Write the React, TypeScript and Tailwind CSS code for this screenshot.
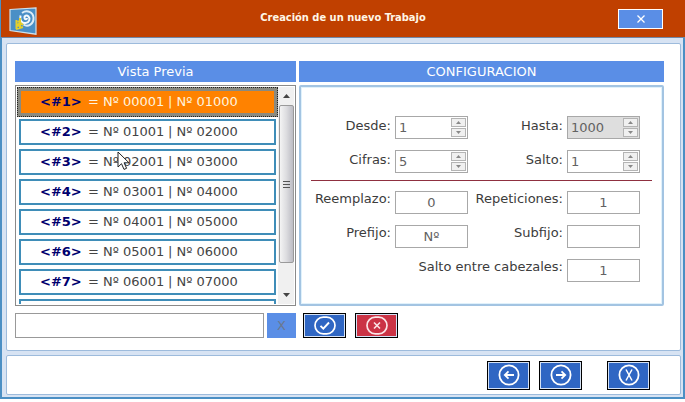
import { useState } from "react";
import type { ReactNode } from "react";
import clsx from "clsx";

interface Job {
  id: number;
  from: string;
  to: string;
}

const jobs: Job[] = [
  { id: 1, from: "00001", to: "01000" },
  { id: 2, from: "01001", to: "02000" },
  { id: 3, from: "02001", to: "03000" },
  { id: 4, from: "03001", to: "04000" },
  { id: 5, from: "04001", to: "05000" },
  { id: 6, from: "05001", to: "06000" },
  { id: 7, from: "06001", to: "07000" },
];

const Logo = () => (
  <svg width="28" height="28" viewBox="0 0 28 28" aria-hidden="true">
    <path d="M1 2.5 27 .8v26.4L1 23.5Z" fill="#4a8fc6" stroke="#cfe0ea" strokeWidth="1.2" />
    <path
      d="M13 6c5-3.500 11-1 11.500 4.500C25 17 19 20.500 14.500 17.500"
      fill="none"
      stroke="#dcecf7"
      strokeWidth="2"
    />
    <path
      d="M11.500 8.500c-1 5 1.500 8 5 7.500 4-.5 5-4.500 3-6.500s-4.500-.5-4 1.500 2.500 1.500 2.500 0"
      fill="none"
      stroke="#f4fafe"
      strokeWidth="2"
    />
    <path d="M7.500 13v9M11 11v5l-4 3 4-1v4M7 22l7-2M9 14l5 4" fill="none" stroke="#e3cf2c" strokeWidth="2" />
  </svg>
);

const Pointer = () => (
  <svg width="13" height="20" viewBox="0 0 13 20" aria-hidden="true">
    <path d="M1 1v15l3.5-3.3L7 18.4l2.6-1.1-2.5-5.5H12Z" fill="#fff" stroke="#222" />
  </svg>
);

const CheckIcon = () => (
  <svg width="22" height="19" viewBox="0 0 22 19" fill="none" stroke="#fff" strokeWidth="1.7" aria-hidden="true">
    <rect x="1" y="1.2" width="20" height="16.6" rx="8.3" />
    <path d="m6.500 9.800 2.800 2.800L15 6.500" strokeWidth="1.9" />
  </svg>
);

const CancelIcon = () => (
  <svg width="22" height="19" viewBox="0 0 22 19" fill="none" stroke="#fbe4e6" strokeWidth="1.7" aria-hidden="true">
    <rect x="1" y="1.2" width="20" height="16.6" rx="8.3" />
    <path d="m8 6.500 6 6M14 6.500l-6 6" strokeWidth="1.6" />
  </svg>
);

const ArrowIcon = ({ back }: { back?: boolean }) => (
  <svg width="22" height="22" viewBox="0 0 22 22" fill="none" stroke="#fff" strokeWidth="1.8" aria-hidden="true">
    <circle cx="11" cy="11" r="9.6" />
    <path d={back ? "M16 11H6.8M10.500 7.300 6.800 11l3.700 3.700" : "M6 11h9.200M11.500 7.300l3.700 3.700-3.700 3.700"} />
  </svg>
);

const ExitIcon = () => (
  <svg width="22" height="22" viewBox="0 0 22 22" fill="none" stroke="#fff" strokeWidth="1.8" aria-hidden="true">
    <circle cx="11" cy="11" r="9.6" />
    <path d="m8 5.5 6 11M14 5.5l-6 11" strokeWidth="1.5" />
  </svg>
);

interface IconButtonProps {
  label: string;
  className: string;
  children: ReactNode;
}

const IconButton = ({ label, className, children }: IconButtonProps) => (
  <button
    type="button"
    aria-label={label}
    className={clsx("flex w-[43px] items-center justify-center border border-black ring-1 ring-inset ring-[#d5e2f5]", className)}
  >
    {children}
  </button>
);

interface FieldProps {
  id: string;
  label: string;
  value: string;
  disabled?: boolean;
  wide?: boolean;
}

const labelStyle = "text-right text-[13px] leading-4 whitespace-nowrap text-[#3c3c3c]";

const SpinField = ({ id, label, value, disabled }: FieldProps) => {
  const [current, setCurrent] = useState(value);
  const step = (by: number) => setCurrent(String(Number(current) + by));
  const arrow = "flex h-[9px] w-[15px] items-center justify-center border border-[#b4b4b4] bg-[#f0f0f0]";

  return (
    <>
      <label htmlFor={id} className={clsx(labelStyle, "pt-0.5")}>
        {label}
      </label>
      <div className={clsx("flex h-[23px] border border-[#a8a8a8]", disabled ? "bg-[#dedede]" : "bg-white")}>
        <input
          id={id}
          value={current}
          disabled={disabled}
          onChange={(e) => setCurrent(e.target.value)}
          className="w-full min-w-0 bg-transparent pl-[3px] text-[13px] text-[#626262] outline-none"
        />
        <div className="flex flex-col justify-center gap-px px-px">
          <button type="button" aria-label={`Subir ${label}`} className={arrow} onClick={() => step(1)}>
            <svg width="5" height="3" viewBox="0 0 5 3"><path d="M0 3 2.5 0 5 3Z" fill="#888" /></svg>
          </button>
          <button type="button" aria-label={`Bajar ${label}`} className={arrow} onClick={() => step(-1)}>
            <svg width="5" height="3" viewBox="0 0 5 3"><path d="M0 0h5L2.5 3Z" fill="#888" /></svg>
          </button>
        </div>
      </div>
    </>
  );
};

const TextField = ({ id, label, value, wide }: FieldProps) => (
  <>
    <label htmlFor={id} className={clsx(labelStyle, wide && "col-span-3")}>
      {label}
    </label>
    <input
      id={id}
      defaultValue={value}
      className="h-[23px] w-full min-w-0 border border-[#a8a8a8] bg-white text-center text-[13px] text-[#626262] outline-none"
    />
  </>
);

const Scrollbar = () => (
  <div className="flex w-4 shrink-0 flex-col items-center bg-[#f0f0f0]">
    <div className="flex h-[18px] items-center">
      <svg width="7" height="4" viewBox="0 0 7 4"><path d="M0 4 3.5 0 7 4Z" fill="#444" /></svg>
    </div>
    <div className="flex h-[158px] w-[15px] items-center justify-center rounded-xs border border-[#9a9a9a] bg-linear-to-r from-[#f4f4f4] via-[#dcdcdf] to-[#bcbcc4]">
      <svg width="7" height="8" viewBox="0 0 7 8"><path d="M0 1.500h7M0 4.500h7M0 7.500h7" stroke="#555" /></svg>
    </div>
    <div className="mt-auto flex h-[18px] items-center">
      <svg width="7" height="4" viewBox="0 0 7 4"><path d="M0 0h7L3.5 4Z" fill="#444" /></svg>
    </div>
  </div>
);

const JobList = () => {
  const [selected, setSelected] = useState(1);

  return (
    <div className="mt-[3px] flex h-[221px] border border-[#8a8a8a] bg-white p-px">
      <ul className="relative flex flex-1 flex-col overflow-hidden">
        {jobs.map((job) => (
          <li key={job.id} className="h-[30px] shrink-0">
            <button
              type="button"
              onClick={() => setSelected(job.id)}
              className={clsx(
                "flex h-[30px] w-full text-left text-[13px]",
                selected === job.id
                  ? "border border-dotted border-[#222] bg-[#8a8a80] p-[3px] text-[#fff3df]"
                  : "p-0.5 text-[#444]"
              )}
            >
              <span
                className={clsx(
                  "flex h-full w-full items-center pl-[19px]",
                  selected === job.id ? "bg-[#ff8200]" : "border-2 border-[#3f8db8] bg-white"
                )}
              >
                <b className="w-12 text-[#00006e]">{`<#${job.id}>`}</b>
                <span className="w-20">{`= Nº ${job.from}`}</span>
                <span>{`| Nº ${job.to}`}</span>
              </span>
            </button>
          </li>
        ))}
        {/* top edge of the next row */}
        <li className="h-[30px] shrink-0 p-0.5" aria-hidden="true">
          <div className="h-full border-2 border-[#3f8db8]" />
        </li>
        <li className="absolute top-[64px] left-[100px]" aria-hidden="true">
          <Pointer />
        </li>
      </ul>
      <Scrollbar />
    </div>
  );
};

const heading = "h-[21px] bg-[#5a8ee6] text-center text-[13px] leading-[21px] text-white";

const App = () => {
  return (
    <div className="bg-white pb-[3px] font-['DejaVu_Sans',sans-serif]">
      <div className="border-x-2 border-b-2 border-[#4b8fc4] bg-[#d7e3f3]">
        <header className="-mr-0.5 -ml-px flex h-[38px] items-center border-b border-[#7187a6] bg-[#c04000]">
          <div className="w-20 pt-1 pl-2">
            <Logo />
          </div>
          <h1 className="flex-1 text-center font-['DejaVu_Sans_Condensed','DejaVu_Sans',sans-serif] text-[11px] font-bold text-[#fff6e6]">
            Creación de un nuevo Trabajo
          </h1>
          <div className="flex w-20 justify-end pr-[22px]">
            <button
              type="button"
              aria-label="Cerrar"
              className="flex h-5 w-[45px] items-center justify-center border border-white bg-[#5a8ee6]"
            >
              <svg width="8" height="8" viewBox="0 0 8 8"><path d="m.5.5 7 7m0-7-7 7" stroke="#fff" strokeWidth="1.3" /></svg>
            </button>
          </div>
        </header>

        <div className="flex flex-col gap-1 pt-[5px] pr-0.5 pb-0.5 pl-1">
          <main className="rounded-xs border border-[#9dbbdc] bg-white pt-[17px] pr-4 pb-3 pl-2">
            <div className="flex gap-[3px]">
              <section className="w-[281px] shrink-0">
                <h2 className={heading}>Vista Previa</h2>
                <JobList />
              </section>

              <section className="flex flex-1 flex-col">
                <h2 className={heading}>CONFIGURACION</h2>
                <form className="mt-[3px] flex-1 rounded-xs border-2 border-[#a3c4e2] px-2.5 pt-[29px] ring-1 ring-[#e0f1fb] ring-inset">
                  <div className="grid grid-cols-[80px_73px_1fr_73px] gap-x-1 gap-y-[11px] pr-3">
                    <SpinField id="desde" label="Desde:" value="1" />
                    <SpinField id="hasta" label="Hasta:" value="1000" disabled />
                    <SpinField id="cifras" label="Cifras:" value="5" />
                    <SpinField id="salto" label="Salto:" value="1" />
                  </div>
                  <hr className="mt-[7px] mb-[10px] border-t border-[#8f3040]" />
                  <div className="grid grid-cols-[80px_73px_1fr_73px] gap-x-1 gap-y-[11px] pr-3">
                    <TextField id="reemplazo" label="Reemplazo:" value="0" />
                    <TextField id="repeticiones" label="Repeticiones:" value="1" />
                    <TextField id="prefijo" label="Prefijo:" value="Nº" />
                    <TextField id="subfijo" label="Subfijo:" value="" />
                    <TextField id="cabezales" label="Salto entre cabezales:" value="1" wide />
                  </div>
                </form>
              </section>
            </div>

            <div className="mt-[7px] flex h-[25px]">
              <input aria-label="Texto" className="w-[249px] border border-[#999] bg-white px-1 text-[13px] outline-none" />
              <button type="button" className="ml-[3px] w-[29px] bg-[#5a8ee6] text-[13px] text-[#6b7890]">
                X
              </button>
              <IconButton label="Aceptar" className="ml-[7px] bg-[#2f66c3]">
                <CheckIcon />
              </IconButton>
              <IconButton label="Cancelar" className="ml-[9px] bg-[#cb3345]">
                <CancelIcon />
              </IconButton>
            </div>
          </main>

          <footer className="flex h-10 items-center justify-end rounded-xs border border-[#9dbbdc] bg-white pr-[30px]">
            <IconButton label="Anterior" className="h-[29px] bg-[#2f66c3]">
              <ArrowIcon back />
            </IconButton>
            <IconButton label="Siguiente" className="ml-[9px] h-[29px] bg-[#2f66c3]">
              <ArrowIcon />
            </IconButton>
            <IconButton label="Salir" className="ml-[25px] h-[29px] bg-[#2f66c3]">
              <ExitIcon />
            </IconButton>
          </footer>
        </div>
      </div>
    </div>
  );
};

export default App;
